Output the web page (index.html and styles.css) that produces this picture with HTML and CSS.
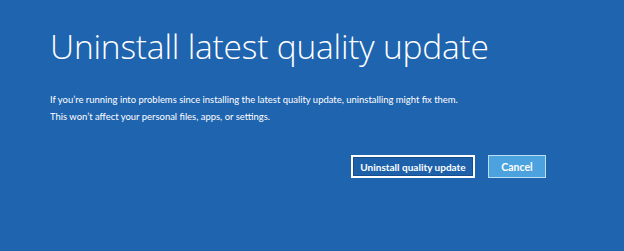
FILE: index.html
```html
<!DOCTYPE html>
<html lang="en">
<head>
<meta charset="utf-8">
<title>Uninstall latest quality update</title>
<link rel="stylesheet" href="styles.css">
</head>
<body>
<main class="screen">
  <h1 class="title">Uninstall latest quality update</h1>
  <div class="desc">
    <p>If you’re running into problems since installing the latest quality update, uninstalling might fix them.</p>
    <p>This won’t affect your personal files, apps, or settings.</p>
  </div>
  <div class="actions">
    <button class="btn btn-primary">Uninstall quality update</button>
    <button class="btn btn-cancel">Cancel</button>
  </div>
</main>
</body>
</html>
```
FILE: styles.css
```css
html, body {
  margin: 0;
  padding: 0;
  height: 100%;
}
body {
  background: #1f64af;
  color: #ffffff;
  font-family: "Lato", "Noto Sans", "Liberation Sans", sans-serif;
}
.screen {
  padding: 24px 78px 0 50px;
  display: flex;
  flex-direction: column;
}
.title {
  margin: 0;
  font-family: "Open Sans", "Noto Sans", sans-serif;
  font-weight: 300;
  font-size: 33.5px;
  line-height: 44px;
  letter-spacing: -0.2px;
  white-space: nowrap;
}
.desc {
  margin-top: 23px;
  font-size: 9.45px;
  line-height: 17px;
  white-space: nowrap;
}
.desc p {
  margin: 0;
}
.actions {
  margin-top: 30px;
  display: flex;
  justify-content: flex-end;
  gap: 13px;
}
.btn {
  font-family: inherit;
  font-size: 10px;
  font-weight: 700;
  color: #ffffff;
  height: 23px;
  padding: 0;
  box-sizing: border-box;
  white-space: nowrap;
  cursor: pointer;
}
.btn-primary {
  width: 124px;
  background: #1e61ab;
  border: 2px solid #ffffff;
  box-shadow: inset 0 0 0 1px #174f8e;
}
.btn-cancel {
  width: 58px;
  font-size: 10.5px;
  background: #4ba2df;
  border: 1px solid #bcdcf4;
}
```
